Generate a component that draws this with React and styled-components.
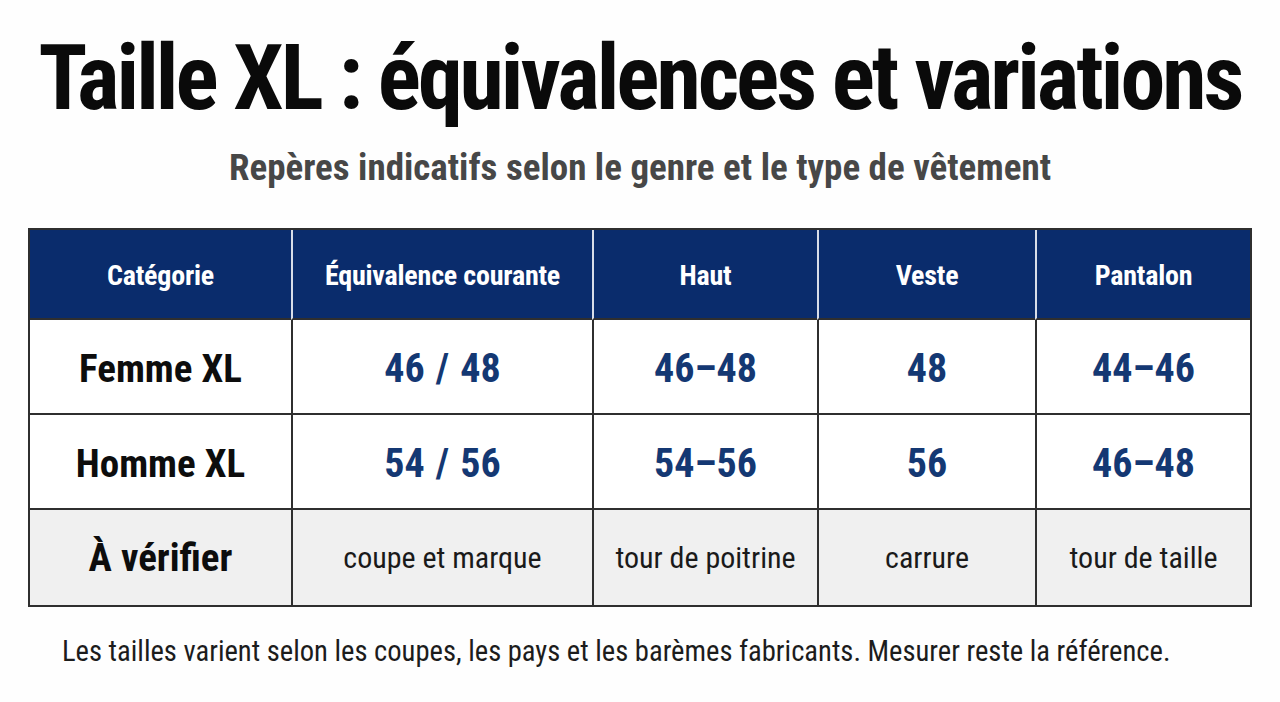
import React from "react";
import styled, { createGlobalStyle } from "styled-components";

const Global = createGlobalStyle`
  html, body { margin: 0; padding: 0; background: #ffffff; }
  body { font-family: "Roboto Condensed", "Liberation Sans", Arial, sans-serif; }
`;

const Page = styled.div`
  width: 1280px;
  height: 702px;
  box-sizing: border-box;
  padding-top: 24px;
  display: flex;
  flex-direction: column;
  align-items: center;
  background: #fefefe;
`;

const Title = styled.h1`
  margin: 0;
  font-weight: 700;
  font-size: 90px;
  line-height: 110px;
  letter-spacing: -3px;
  color: #0a0a0a;
  white-space: nowrap;
`;

const Subtitle = styled.p`
  margin: 12px 0 0 0;
  font-weight: 700;
  font-size: 37px;
  line-height: 44px;
  color: #474747;
  white-space: nowrap;
`;

const Grid = styled.div`
  margin-top: 38px;
  display: grid;
  grid-template-columns: 261px 301px 225px 218px 215px;
  grid-template-rows: 90px repeat(3, 95px);
  width: 1224px;
  border: 2px solid #2f2f2f;
  box-sizing: border-box;
`;

const HeadCell = styled.div`
  background: #0a2c6c;
  color: #ffffff;
  font-weight: 700;
  font-size: 28px;
  letter-spacing: -0.2px;
  display: flex;
  align-items: center;
  justify-content: center;
  padding-top: 2px;
  border-left: ${(p) => (p.$first ? "none" : "2px solid #d8dde8")};
  border-bottom: 2px solid #2f2f2f;
  white-space: nowrap;
`;

const Cell = styled.div`
  background: ${(p) => (p.$muted ? "#f0f0f0" : "#ffffff")};
  display: flex;
  align-items: center;
  justify-content: center;
  padding-top: ${(p) => (p.$muted ? "0" : "4px")};
  border-left: ${(p) => (p.$first ? "none" : "2px solid #2f2f2f")};
  border-bottom: ${(p) => (p.$last ? "none" : "2px solid #2f2f2f")};
  white-space: nowrap;
`;

const RowLabel = styled.span`
  font-weight: 700;
  font-size: 39px;
  color: #0d0d0d;
`;

const Value = styled.span`
  font-weight: 700;
  font-size: 40px;
  word-spacing: 2px;
  color: #143873;
`;

const Note = styled.span`
  font-weight: 400;
  font-size: 30px;
  color: #1a1a1a;
`;

const Footer = styled.p`
  margin: 27px 0 0 0;
  align-self: flex-start;
  padding-left: 62px;
  font-weight: 400;
  font-size: 28.6px;
  color: #1c1c1c;
  white-space: nowrap;
`;

const headers = ["Catégorie", "Équivalence courante", "Haut", "Veste", "Pantalon"];
const rows = [
  ["Femme XL", "46 / 48", "46–48", "48", "44–46"],
  ["Homme XL", "54 / 56", "54–56", "56", "46–48"],
];
const check = ["À vérifier", "coupe et marque", "tour de poitrine", "carrure", "tour de taille"];

export default function App() {
  return (
    <>
      <Global />
      <Page>
        <Title>Taille XL : équivalences et variations</Title>
        <Subtitle>Repères indicatifs selon le genre et le type de vêtement</Subtitle>
        <Grid>
          {headers.map((h, i) => (
            <HeadCell key={h} $first={i === 0}>{h}</HeadCell>
          ))}
          {rows.map((r) =>
            r.map((c, i) => (
              <Cell key={r[0] + i} $first={i === 0}>
                {i === 0 ? <RowLabel>{c}</RowLabel> : <Value>{c}</Value>}
              </Cell>
            ))
          )}
          {check.map((c, i) => (
            <Cell key={c} $first={i === 0} $muted $last>
              {i === 0 ? <RowLabel>{c}</RowLabel> : <Note>{c}</Note>}
            </Cell>
          ))}
        </Grid>
        <Footer>Les tailles varient selon les coupes, les pays et les barèmes fabricants. Mesurer reste la référence.</Footer>
      </Page>
    </>
  );
}
